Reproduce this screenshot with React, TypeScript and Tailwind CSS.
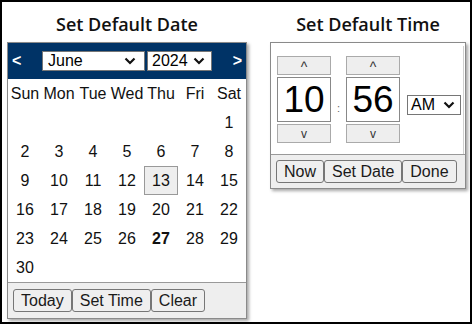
import React from 'react';

const DAYS = ['Sun', 'Mon', 'Tue', 'Wed', 'Thu', 'Fri', 'Sat'];

function Chevron() {
  return (
    <svg width="12" height="8" viewBox="0 0 12 8" className="shrink-0">
      <polyline points="1.5,1.5 6,6 10.5,1.5" fill="none" stroke="#111" strokeWidth="2.2" />
    </svg>
  );
}

function Btn({ children }: { children: React.ReactNode }) {
  return (
    <button
      type="button"
      className="h-[23px] px-[7px] border border-[#767676] bg-[#efefef] rounded-[3px] text-[16px] leading-none text-[#1a1a1a]"
    >
      {children}
    </button>
  );
}

function buildWeeks() {
  const cells: (number | null)[] = Array(6).fill(null);
  for (let d = 1; d <= 30; d++) cells.push(d);
  while (cells.length % 7) cells.push(null);
  const weeks: (number | null)[][] = [];
  for (let i = 0; i < cells.length; i += 7) weeks.push(cells.slice(i, i + 7));
  return weeks;
}

function DatePanel() {
  const weeks = buildWeeks();
  return (
    <div className="flex flex-col items-center w-[240px]">
      <h2 className="h-[40px] pt-[13px] text-[18px] leading-none font-semibold text-[#111] font-['Open_Sans',sans-serif]">
        Set Default Date
      </h2>
      <div className="w-[240px] border border-[#8a8a8a] bg-white shadow-[2px_2px_3px_rgba(0,0,0,0.35)]">
        <div className="h-[36px] bg-[#003366] flex items-center justify-between px-[4px]">
          <span className="text-white font-bold text-[16px] w-[10px]">&lt;</span>
          <div className="flex gap-[2px]">
            <div className="w-[103px] h-[20px] bg-white border border-[#767676] flex items-center justify-between pl-[5px] pr-[8px] text-[16px]">
              June <Chevron />
            </div>
            <div className="w-[65px] h-[20px] bg-white border border-[#767676] flex items-center justify-between pl-[4px] pr-[6px] text-[16px]">
              2024 <Chevron />
            </div>
          </div>
          <span className="text-white font-bold text-[16px] w-[10px] text-right">&gt;</span>
        </div>
        <div className="grid grid-cols-7 text-[16px] text-[#111]">
          {DAYS.map((d) => (
            <div key={d} className="h-[29px] flex items-center justify-center">
              {d}
            </div>
          ))}
          {weeks.flat().map((d, i) => (
            <div
              key={i}
              className={
                'h-[29px] flex items-center justify-center ' +
                (d === 13 ? 'bg-[#eeeeee] border border-[#999999] ' : '') +
                (d === 27 ? 'font-bold' : '')
              }
            >
              {d ?? ''}
            </div>
          ))}
        </div>
        <div className="bg-[#eeeeee] border-t border-[#999999] h-[36px] flex items-center pl-[5px]">
          <Btn>Today</Btn>
          <Btn>Set Time</Btn>
          <Btn>Clear</Btn>
        </div>
      </div>
    </div>
  );
}

function Spinner({ value }: { value: string }) {
  return (
    <div className="flex flex-col gap-[2px] w-[54px]">
      <div className="h-[19px] bg-[#eeeeee] border border-[#aaaaaa] flex items-center justify-center text-[14px] leading-none pt-[3px] text-[#333]">
        ^
      </div>
      <div className="h-[45px] bg-white border border-[#888888] flex items-center justify-center text-[37px] leading-none text-black">
        {value}
      </div>
      <div className="h-[19px] bg-[#eeeeee] border border-[#aaaaaa] flex items-center justify-center text-[12px] text-[#333]">
        v
      </div>
    </div>
  );
}

function TimePanel() {
  return (
    <div className="flex flex-col items-center w-[196px]">
      <h2 className="h-[40px] pt-[13px] text-[18px] leading-none font-semibold text-[#111] font-['Open_Sans',sans-serif]">
        Set Default Time
      </h2>
      <div className="w-[196px] border border-[#8a8a8a] bg-white shadow-[2px_2px_3px_rgba(0,0,0,0.35)]">
        <div className="flex items-start pl-[6px] pt-[10px] pb-[11px] mr-[1px] border-r border-[#d0d0d0] mt-[3px]">
          <Spinner value="10" />
          <div className="w-[15px] text-center text-[11px] text-[#666] mt-[44px]">:</div>
          <Spinner value="56" />
          <div className="ml-[7px] mt-[39px] w-[54px] h-[20px] bg-white border border-[#767676] flex items-center justify-between pl-[3px] pr-[5px] text-[16px]">
            AM <Chevron />
          </div>
        </div>
        <div className="bg-[#eeeeee] border-t border-[#999999] h-[34px] flex items-center pl-[5px]">
          <Btn>Now</Btn>
          <Btn>Set Date</Btn>
          <Btn>Done</Btn>
        </div>
      </div>
    </div>
  );
}

export default function App() {
  return (
    <div className="w-[472px] h-[324px] border-2 border-black bg-white font-['Liberation_Sans',Arial,sans-serif] flex items-start pl-[5px] gap-[23px]">
      <DatePanel />
      <TimePanel />
    </div>
  );
}
